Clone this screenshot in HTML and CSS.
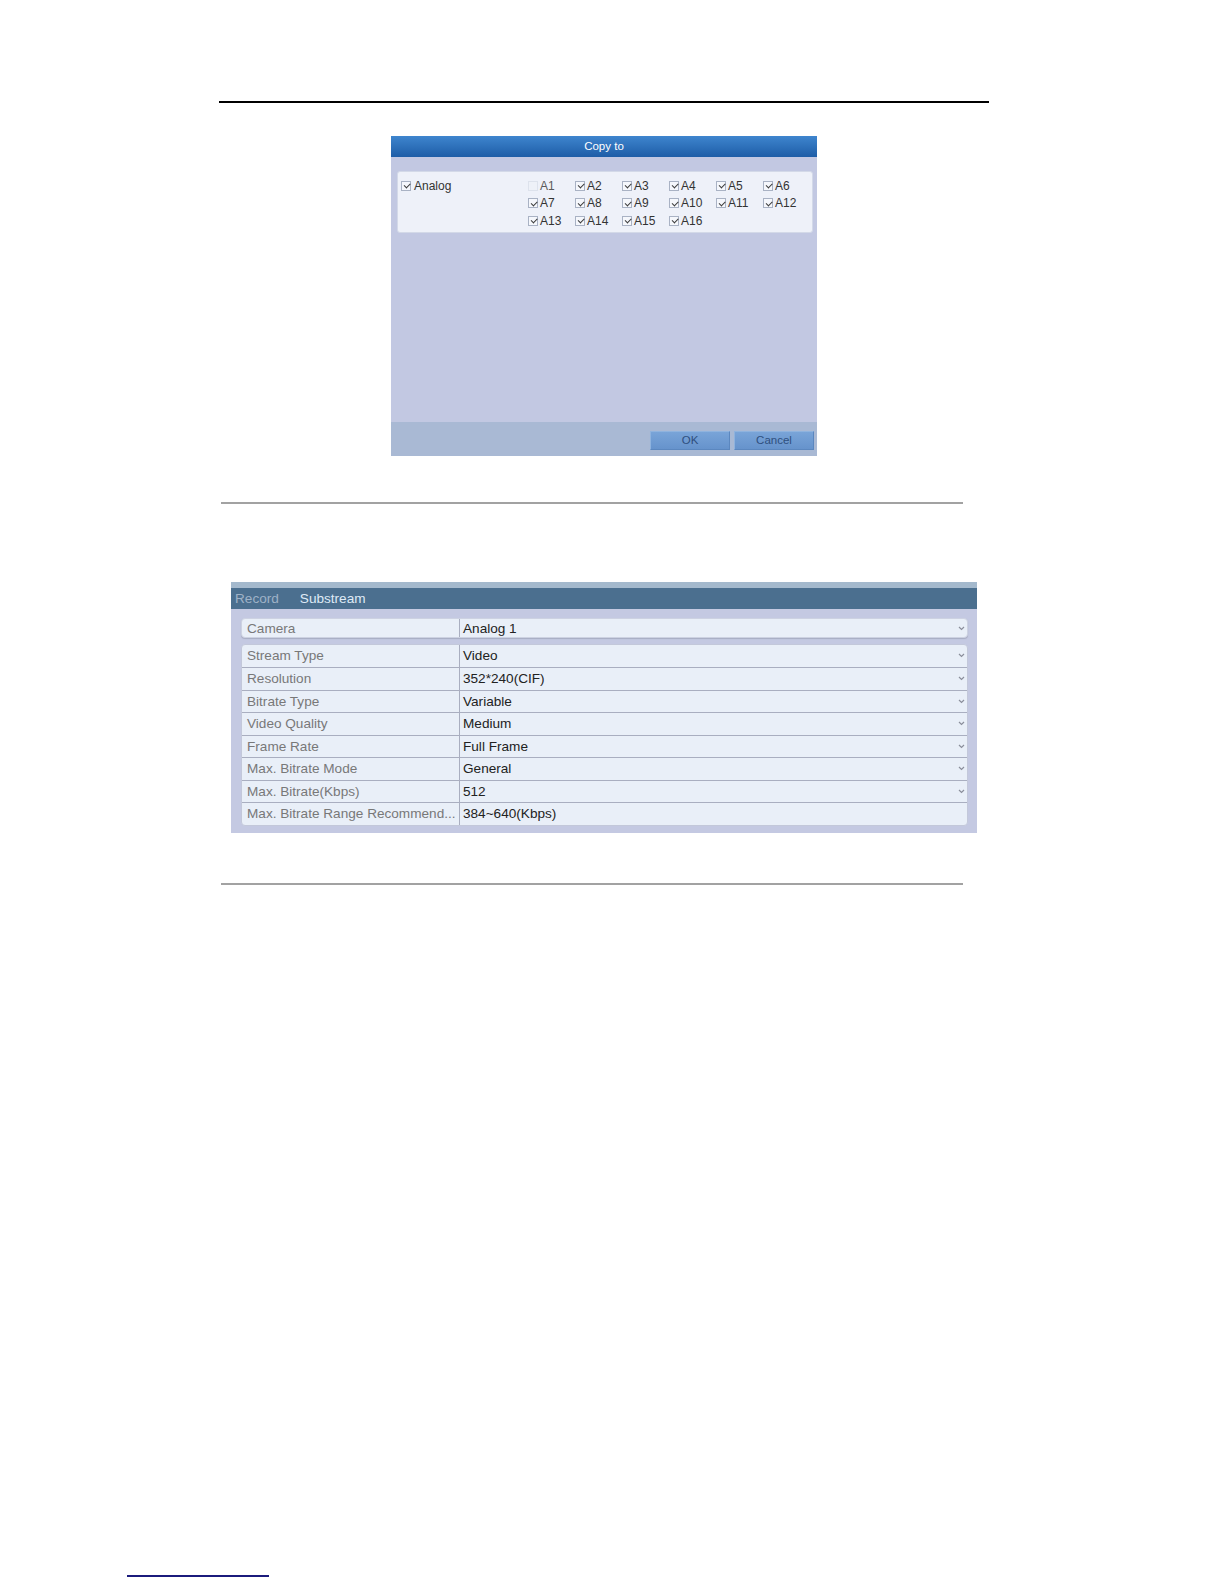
FILE: index.html
```html
<!DOCTYPE html>
<html>
<head>
<meta charset="utf-8">
<title>Copy to / Substream</title>
<link rel="stylesheet" href="styles.css">
</head>
<body>
<div class="page">
  <div class="rule-top"></div>

  <div class="dlg">
    <div class="dlg-title">Copy to</div>
    <div class="dlg-body">
      <div class="cp-panel">
        <div class="cp-group"><span class="cb on"></span><span class="cp-name">Analog</span></div>
        <div class="cp-grid">
          <div class="cp-item off"><span class="cb"></span>A1</div>
          <div class="cp-item"><span class="cb on"></span>A2</div>
          <div class="cp-item"><span class="cb on"></span>A3</div>
          <div class="cp-item"><span class="cb on"></span>A4</div>
          <div class="cp-item"><span class="cb on"></span>A5</div>
          <div class="cp-item"><span class="cb on"></span>A6</div>
          <div class="cp-item"><span class="cb on"></span>A7</div>
          <div class="cp-item"><span class="cb on"></span>A8</div>
          <div class="cp-item"><span class="cb on"></span>A9</div>
          <div class="cp-item"><span class="cb on"></span>A10</div>
          <div class="cp-item"><span class="cb on"></span>A11</div>
          <div class="cp-item"><span class="cb on"></span>A12</div>
          <div class="cp-item"><span class="cb on"></span>A13</div>
          <div class="cp-item"><span class="cb on"></span>A14</div>
          <div class="cp-item"><span class="cb on"></span>A15</div>
          <div class="cp-item"><span class="cb on"></span>A16</div>
        </div>
      </div>
    </div>
    <div class="dlg-foot">
      <button class="btn">OK</button>
      <button class="btn">Cancel</button>
    </div>
  </div>

  <div class="rule-gray r1"></div>

  <div class="ss">
    <div class="ss-strip"></div>
    <div class="ss-head"><span class="tab dim">Record</span><span class="tab">Substream</span></div>
    <div class="ss-body">
      <div class="row single">
        <div class="lbl">Camera</div>
        <div class="val"><span>Analog 1</span><svg class="chev" width="7" height="5" viewBox="0 0 7 5"><path d="M1 1l2.5 2.5L6 1" fill="none" stroke="#8b8f9c" stroke-width="1.2"/></svg></div>
      </div>
      <div class="group">
        <div class="row"><div class="lbl">Stream Type</div><div class="val"><span>Video</span><svg class="chev" width="7" height="5" viewBox="0 0 7 5"><path d="M1 1l2.5 2.5L6 1" fill="none" stroke="#8b8f9c" stroke-width="1.2"/></svg></div></div>
        <div class="row"><div class="lbl">Resolution</div><div class="val"><span>352*240(CIF)</span><svg class="chev" width="7" height="5" viewBox="0 0 7 5"><path d="M1 1l2.5 2.5L6 1" fill="none" stroke="#8b8f9c" stroke-width="1.2"/></svg></div></div>
        <div class="row"><div class="lbl">Bitrate Type</div><div class="val"><span>Variable</span><svg class="chev" width="7" height="5" viewBox="0 0 7 5"><path d="M1 1l2.5 2.5L6 1" fill="none" stroke="#8b8f9c" stroke-width="1.2"/></svg></div></div>
        <div class="row"><div class="lbl">Video Quality</div><div class="val"><span>Medium</span><svg class="chev" width="7" height="5" viewBox="0 0 7 5"><path d="M1 1l2.5 2.5L6 1" fill="none" stroke="#8b8f9c" stroke-width="1.2"/></svg></div></div>
        <div class="row"><div class="lbl">Frame Rate</div><div class="val"><span>Full Frame</span><svg class="chev" width="7" height="5" viewBox="0 0 7 5"><path d="M1 1l2.5 2.5L6 1" fill="none" stroke="#8b8f9c" stroke-width="1.2"/></svg></div></div>
        <div class="row"><div class="lbl">Max. Bitrate Mode</div><div class="val"><span>General</span><svg class="chev" width="7" height="5" viewBox="0 0 7 5"><path d="M1 1l2.5 2.5L6 1" fill="none" stroke="#8b8f9c" stroke-width="1.2"/></svg></div></div>
        <div class="row"><div class="lbl">Max. Bitrate(Kbps)</div><div class="val"><span>512</span><svg class="chev" width="7" height="5" viewBox="0 0 7 5"><path d="M1 1l2.5 2.5L6 1" fill="none" stroke="#8b8f9c" stroke-width="1.2"/></svg></div></div>
        <div class="row"><div class="lbl">Max. Bitrate Range Recommend...</div><div class="val"><span>384~640(Kbps)</span></div></div>
      </div>
    </div>
  </div>

  <div class="rule-gray r2"></div>

  <div class="foot-line"></div>
</div>
</body>
</html>
```

FILE: styles.css
```css
html, body {
  margin: 0;
  padding: 0;
  background: #ffffff;
}

body {
  font-family: "Liberation Sans", Arial, sans-serif;
}

.page {
  width: 1224px;
  height: 1584px;
  overflow: hidden;
  padding-top: 101px;
  box-sizing: border-box;
}

.rule-top {
  margin-left: 219px;
  width: 770px;
  height: 2px;
  background: #000000;
}

/* ---------- Copy to dialog ---------- */
.dlg {
  margin: 33px 0 0 391px;
  width: 426px;
  height: 320px;
  display: flex;
  flex-direction: column;
  background: #c2c8e2;
}

.dlg-title {
  height: 21px;
  background: linear-gradient(#3e85ce, #1e5da7);
  color: #ffffff;
  font-size: 11.5px;
  line-height: 21px;
  text-align: center;
}

.dlg-body {
  flex: 1;
  padding: 14px 4px 0 6px;
}

.cp-panel {
  height: 62px;
  box-sizing: border-box;
  background: #eef1f9;
  border: 1px solid #d3d9e8;
  border-radius: 3px;
  display: flex;
  padding: 5px 0 0 3px;
  font-size: 12px;
  color: #333333;
}

.cp-group {
  width: 127px;
  height: 17.5px;
  display: flex;
  align-items: center;
  gap: 3px;
}

.cp-grid {
  display: grid;
  grid-template-columns: repeat(6, 47px);
  grid-auto-rows: 17.5px;
}

.cp-item {
  display: flex;
  align-items: center;
  gap: 2px;
}

.cp-item.off {
  color: #5a5a5a;
}

.cb {
  position: relative;
  width: 10px;
  height: 10px;
  box-sizing: border-box;
  border: 1px solid #a9b2c4;
  background: #f5f7fc;
  flex: none;
}

.cp-item.off .cb {
  border-color: #dde2ec;
  background: #eef1f8;
}

.cb.on::after {
  content: "";
  position: absolute;
  left: 1.5px;
  top: 1.5px;
  width: 5px;
  height: 2.5px;
  border-left: 1.3px solid #3c3c3c;
  border-bottom: 1.3px solid #3c3c3c;
  transform: rotate(-45deg);
}

.dlg-foot {
  height: 34px;
  box-sizing: border-box;
  background: #a9b9d4;
  display: flex;
  justify-content: flex-end;
  align-items: flex-start;
  gap: 4px;
  padding: 9px 3px 0 0;
}

.btn {
  width: 80px;
  height: 19px;
  margin: 0;
  padding: 0;
  border: 1px solid #5b87bf;
  border-top-color: #8fb3de;
  border-left-color: #8fb3de;
  background: linear-gradient(#79a4d8, #6693cc);
  color: #2f4f7e;
  font-family: "Liberation Sans", Arial, sans-serif;
  font-size: 11.5px;
  line-height: 17px;
}

/* ---------- gray rules ---------- */
.rule-gray {
  margin-left: 221px;
  width: 742px;
  height: 2px;
  background: #a2a2a2;
}

.r1 {
  margin-top: 46px;
}

.r2 {
  margin-top: 50px;
}

/* ---------- Substream panel ---------- */
.ss {
  margin: 78px 0 0 231px;
  width: 746px;
  height: 251px;
  display: flex;
  flex-direction: column;
  background: #c4c9e2;
}

.ss-strip {
  height: 6px;
  background: #a4b9cd;
}

.ss-head {
  height: 21px;
  background: #4b6f8f;
  font-size: 13.6px;
  line-height: 21px;
  padding-left: 4px;
  display: flex;
  gap: 21px;
}

.tab {
  color: #dfeaf6;
}

.tab.dim {
  color: #9fb2c7;
}

.ss-body {
  flex: 1;
  padding: 9px 9px 0 10px;
}

.row {
  display: flex;
  height: 22.5px;
  box-sizing: border-box;
  font-size: 13.6px;
  line-height: 21.5px;
}

.lbl {
  width: 218px;
  box-sizing: border-box;
  border-right: 1px solid #a9aec0;
  padding-left: 5px;
  color: #787878;
  white-space: nowrap;
  overflow: hidden;
}

.val {
  flex: 1;
  padding: 0 2px 0 3px;
  color: #222222;
  display: flex;
  align-items: center;
  justify-content: space-between;
}

.chev {
  display: block;
  flex: none;
}

.row.single {
  height: 20px;
  line-height: 19px;
  background: #e9eff8;
  border: 1px solid #cdd2e2;
  border-radius: 4px;
  box-shadow: 0 1px 1px #a7acc2;
}

.group {
  margin-top: 5.5px;
  background: #e9eff8;
  border: 1px solid #c3c8da;
  border-radius: 4px;
}

.group .row + .row {
  border-top: 1px solid #a9aec0;
}

/* ---------- footer link line ---------- */
.foot-line {
  margin: 690px 0 0 127px;
  width: 142px;
  height: 2px;
  background: #1b1b7c;
}
```
